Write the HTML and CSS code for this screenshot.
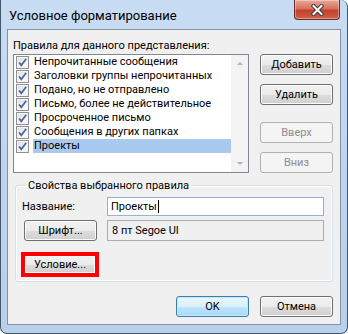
FILE: index.html
```html
<!DOCTYPE html>
<html lang="ru">
<head>
  <meta charset="UTF-8" />
  <title>Условное форматирование</title>
  <link rel="stylesheet" href="styles.css">
</head>
<body>
  <div class="window">
    <div class="titlebar">
      <span class="title">Условное форматирование</span>
      <button class="close-btn">
        <svg width="13" height="12" viewBox="0 0 13 12">
          <path d="M2.5 2 L10.5 10 M10.5 2 L2.5 10" stroke="#3b3b3b" stroke-width="4" stroke-linecap="square" fill="none" />
          <path d="M2.5 2 L10.5 10 M10.5 2 L2.5 10" stroke="#ffffff" stroke-width="2" stroke-linecap="square" fill="none" />
        </svg>
      </button>
    </div>

    <div class="client">
      <div class="rules-label">Правила для данного представления:</div>
      <div class="rules-row">
        <div class="listbox">
          <ul class="rule-list">
            <li class="rule"><span class="check"><svg width="11" height="11" viewBox="0 0 11 11"><path d="M2 5.5 L4.3 8.2 L9.2 1.8" /></svg></span><span class="rule-name">Непрочитанные сообщения</span></li>
            <li class="rule"><span class="check"><svg width="11" height="11" viewBox="0 0 11 11"><path d="M2 5.5 L4.3 8.2 L9.2 1.8" /></svg></span><span class="rule-name">Заголовки группы непрочитанных</span></li>
            <li class="rule"><span class="check"><svg width="11" height="11" viewBox="0 0 11 11"><path d="M2 5.5 L4.3 8.2 L9.2 1.8" /></svg></span><span class="rule-name">Подано, но не отправлено</span></li>
            <li class="rule"><span class="check"><svg width="11" height="11" viewBox="0 0 11 11"><path d="M2 5.5 L4.3 8.2 L9.2 1.8" /></svg></span><span class="rule-name">Письмо, более не действительное</span></li>
            <li class="rule"><span class="check"><svg width="11" height="11" viewBox="0 0 11 11"><path d="M2 5.5 L4.3 8.2 L9.2 1.8" /></svg></span><span class="rule-name">Просроченное письмо</span></li>
            <li class="rule"><span class="check"><svg width="11" height="11" viewBox="0 0 11 11"><path d="M2 5.5 L4.3 8.2 L9.2 1.8" /></svg></span><span class="rule-name">Сообщения в других папках</span></li>
            <li class="rule selected"><span class="check"><svg width="11" height="11" viewBox="0 0 11 11"><path d="M2 5.5 L4.3 8.2 L9.2 1.8" /></svg></span><span class="rule-name">Проекты</span></li>
          </ul>
          <div class="scrollbar">
            <span class="arrow up"></span>
            <span class="arrow down"></span>
          </div>
        </div>
        <div class="side-buttons">
          <button class="btn add">Добавить</button>
          <button class="btn remove">Удалить</button>
          <button class="btn up" disabled>Вверх</button>
          <button class="btn down" disabled>Вниз</button>
        </div>
      </div>

      <fieldset class="props">
        <legend>Свойства выбранного правила</legend>
        <div class="prop-row name-row">
          <label class="prop-label">Название:</label>
          <div class="textbox">Проекты<span class="caret"></span></div>
        </div>
        <div class="prop-row font-row">
          <button class="btn">Шрифт...</button>
          <div class="readonly">8 пт Segoe UI</div>
        </div>
        <div class="marked">
          <button class="btn condition">Условие...</button>
        </div>
      </fieldset>

      <div class="footer">
        <button class="btn default">OK</button>
        <button class="btn">Отмена</button>
      </div>
    </div>
  </div>
</body>
</html>
```

FILE: styles.css
```css
body {
  margin: 0;
  font-family: Roboto, 'Liberation Sans', sans-serif;
  font-size: 11px;
  color: #000000;
  background: #ffffff;
}

.window {
  width: 348px;
  height: 334px;
  box-sizing: border-box;
  display: flex;
  flex-direction: column;
  padding: 0 6px 8px 6px;
  border: 1px solid #45556a;
  border-top: none;
  border-radius: 0 7px 7px 7px;
  background: linear-gradient(180deg, #c8dcf3 0%, #bfd5ee 50%, #b9d0ea 100%);
}

.titlebar {
  height: 29px;
  display: flex;
  justify-content: space-between;
  align-items: flex-start;
}

.title {
  font-size: 13px;
  line-height: 15px;
  margin-top: 8px;
  padding-left: 2px;
}

.close-btn {
  width: 46px;
  height: 20px;
  margin-right: 1px;
  padding: 0;
  display: flex;
  align-items: center;
  justify-content: center;
  border: 1px solid #6b2a24;
  border-top: none;
  border-radius: 0 0 4px 4px;
  background: linear-gradient(180deg, #eaa899 0%, #d8725f 45%, #c2412c 55%, #d0604a 100%);
  box-shadow: inset 0 0 0 1px rgba(255, 255, 255, 0.35);
}

.client {
  flex: 1;
  background: #f0f0f0;
  border: 1px solid #8392a4;
  padding: 8px 7px 0 5px;
}

.rules-label {
  line-height: 15px;
}

.rules-row {
  display: flex;
  gap: 11px;
  margin-top: 1px;
}

.listbox {
  width: 236px;
  height: 119px;
  box-sizing: border-box;
  border: 1px solid #828790;
  background: #ffffff;
  display: flex;
}

.rule-list {
  flex: 1;
  margin: 0;
  padding: 0;
  list-style: none;
}

.rule {
  height: 14px;
  line-height: 14px;
  display: flex;
  align-items: center;
  padding-left: 2px;
  white-space: nowrap;
}

.check {
  width: 11px;
  height: 11px;
  margin-right: 4px;
  border: 1px solid #8e8f8f;
  background: linear-gradient(135deg, #dadbdc 0%, #f4f4f5 60%, #ffffff 100%);
  box-shadow: inset 0 0 0 1px #f6f6f6;
}

.check svg {
  display: block;
}

.check path {
  fill: none;
  stroke: #4c66a0;
  stroke-width: 1.8;
}

.rule-name {
  flex: 1;
  padding-left: 1px;
}

.rule.selected .rule-name {
  background: #a9caee;
}

.scrollbar {
  width: 17px;
  background: #f3f3f3;
  display: flex;
  flex-direction: column;
  justify-content: space-between;
  align-items: center;
  padding: 7px 0 7px 0;
}

.arrow {
  width: 0;
  height: 0;
  border-left: 3px solid transparent;
  border-right: 3px solid transparent;
}

.arrow.up {
  border-bottom: 3px solid #b2b2b2;
}

.arrow.down {
  border-top: 3px solid #b2b2b2;
}

.side-buttons {
  display: flex;
  flex-direction: column;
}

.btn {
  width: 73px;
  height: 21px;
  padding: 0;
  font-family: inherit;
  font-size: 11px;
  color: #000000;
  border: 1px solid #707070;
  border-radius: 3px;
  background: linear-gradient(180deg, #f2f2f2 0%, #ebebeb 50%, #dddddd 51%, #cfcfcf 100%);
  box-shadow: inset 0 0 0 1px #fcfcfc;
}

.btn:disabled {
  color: #8d8d8d;
  border-color: #adb2b5;
  background: #f4f4f4;
  box-shadow: none;
}

.side-buttons .remove {
  margin-top: 9px;
}

.side-buttons .up {
  margin-top: 17px;
}

.side-buttons .down {
  margin-top: 9px;
}

.props {
  margin: 5px 0 0 2px;
  padding: 4px 0 4px 6px;
  border: 1px solid #d5dfe5;
  border-radius: 3px;
  box-shadow: inset 0 0 0 1px #ffffff;
}

.props legend {
  margin-left: 4px;
  padding: 0 2px;
  line-height: 15px;
}

.prop-row {
  display: flex;
  align-items: center;
}

.prop-label {
  width: 85px;
}

.textbox {
  width: 217px;
  height: 19px;
  box-sizing: border-box;
  border: 1px solid #98b1cd;
  background: #ffffff;
  padding-left: 3px;
  line-height: 17px;
  display: flex;
  align-items: center;
}

.caret {
  width: 1px;
  height: 13px;
  background: #000000;
  margin-left: 1px;
}

.font-row {
  margin-top: 4px;
}

.font-row .btn {
  margin-left: 2px;
}

.readonly {
  width: 217px;
  height: 21px;
  box-sizing: border-box;
  margin-left: 10px;
  border: 1px solid #abadb3;
  background: #f0f0f0;
  padding-left: 4px;
  line-height: 19px;
}

.marked {
  width: 78px;
  height: 25px;
  box-sizing: border-box;
  margin: 11px 0 0 -1px;
  border: 4px solid #ff0000;
}

.marked .condition {
  width: 70px;
  height: 17px;
  border: none;
  border-radius: 0;
  display: block;
}

.footer {
  display: flex;
  justify-content: flex-end;
  gap: 11px;
  margin-top: 14px;
}

.btn.default {
  border-color: #3c7fb1;
  background: linear-gradient(180deg, #eaf6fd 0%, #d9f0fc 50%, #bee6fd 51%, #a7d9f5 100%);
  box-shadow: inset 0 0 0 1px #c6e6f8;
}
```
